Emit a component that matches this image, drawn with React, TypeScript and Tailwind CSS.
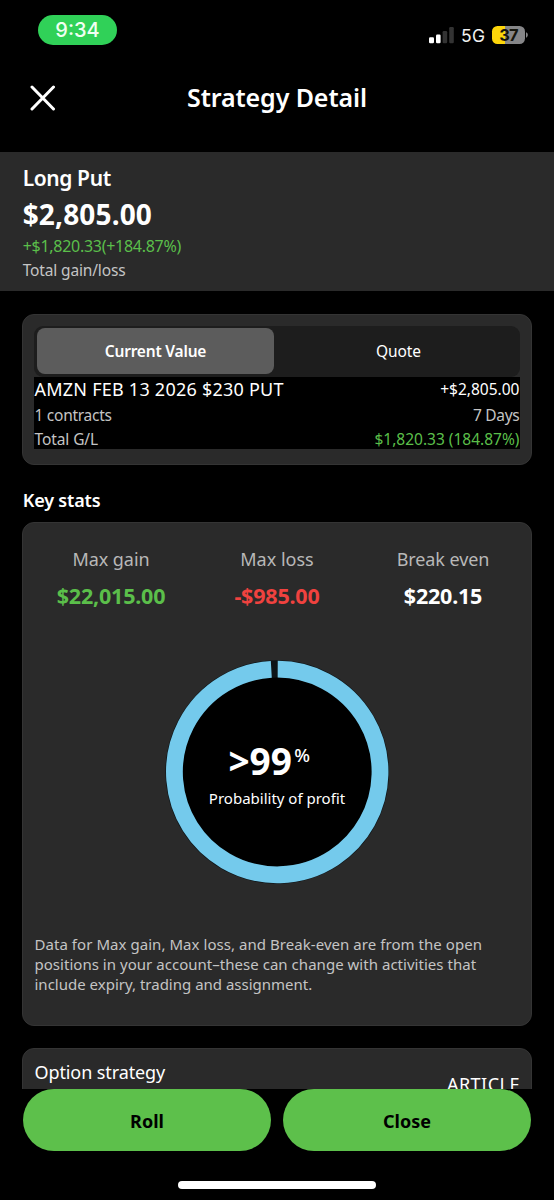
const stats = [
  { label: "Max gain", value: "$22,015.00", color: "text-[#5bbf4a]", labelTrack: "tracking-[-0.05px]" },
  { label: "Max loss", value: "-$985.00", color: "text-[#f0423f]", labelTrack: "tracking-normal" },
  { label: "Break even", value: "$220.15", color: "text-white", labelTrack: "tracking-[-0.1px]" },
];

function StatusBar() {
  return (
    <div className="flex h-[60px] shrink-0 items-start justify-between pl-[38px] pr-[26px] pt-[15px] font-['Inter',sans-serif]">
      <div className="flex h-[30px] w-[79px] items-center justify-center rounded-full bg-[#30d158] pt-px text-[20px] font-medium leading-[29px] text-[#f0fff2]">
        9:34
      </div>
      <div className="mt-[11px] flex h-[18px] items-center">
        <svg width="25" height="18" viewBox="0 0 25 18">
          <rect x="0" y="11.3" width="5" height="6" rx="1.2" fill="#fff" />
          <rect x="7" y="8.5" width="4.6" height="8.8" rx="1.2" fill="#fff" />
          <rect x="13.6" y="5" width="4.6" height="12.3" rx="1.2" fill="#333" />
          <rect x="20.2" y="1" width="4.6" height="16.3" rx="1.2" fill="#333" />
        </svg>
        <span className="ml-[7px] mt-[2px] w-[31px] text-[17.5px] leading-[18px] tracking-[0.3px] text-[#f2f2f2]">5G</span>
        <div className="flex h-[18px] w-[33px] items-center justify-center rounded-[5.5px] bg-[linear-gradient(90deg,#fdd60a_12.5px,#868688_12.5px)] text-[16.5px] font-bold leading-[18px] tracking-[-0.8px] text-[#15150c]">
          37
        </div>
        <svg className="ml-px" width="2" height="6" viewBox="0 0 2 6">
          <path d="M0 0.3C2.4 1.2 2.4 4.8 0 5.7Z" fill="#868688" />
        </svg>
      </div>
    </div>
  );
}

function ProbabilityChart() {
  return (
    <div className="mx-auto grid h-[224px] w-[224px]">
      <svg className="col-start-1 row-start-1" width="224" height="224" viewBox="0 0 224 224">
        <circle cx="112.2" cy="112" r="111.8" fill="#0b1418" />
        <circle cx="112.2" cy="112" r="94.5" fill="#000" />
        <path d="M112.7 9.2A102.8 102.8 0 1 1 106.3 9.37" fill="none" stroke="#74caec" strokeWidth="16.8" />
      </svg>
      <div className="col-start-1 row-start-1 pt-[80px] text-white">
        <div className="flex items-start pl-[63.5px]">
          <span className="text-[37px] font-bold leading-[42px] tracking-[-0.1px]">&gt;99</span>
          <span className="ml-[2.5px] text-[18.5px] font-medium leading-[29px]">%</span>
        </div>
        <p className="mt-[6px] text-center text-[15px] leading-[21px]">Probability of profit</p>
      </div>
    </div>
  );
}

export default function App() {
  return (
    <div className="flex h-[1200px] w-[554px] flex-col overflow-hidden bg-black font-['Noto_Sans',sans-serif] text-white">
      <StatusBar />
      <header className="grid h-[92px] shrink-0 grid-cols-[60px_1fr_60px] items-start">
        <button className="ml-[30px] mt-[25px] w-[26px]" aria-label="Close">
          <svg width="26" height="26" viewBox="0 0 26 26" fill="none" stroke="#fff" strokeWidth="3" strokeLinecap="round">
            <path d="M2 2L23.5 24M23.5 2L2 24" />
          </svg>
        </button>
        <h1 className="mt-[21px] text-center text-[25px] font-semibold leading-[33px] tracking-[-0.1px]">Strategy Detail</h1>
      </header>

      <section className="h-[139px] shrink-0 bg-[#2a2a2a] pl-[22.7px] pt-[13px]">
        <h2 className="text-[21px] font-semibold leading-[26px] tracking-[-0.4px]">Long Put</h2>
        <p className="mt-[6px] text-[28px] font-bold leading-[34px] tracking-[0.15px]">$2,805.00</p>
        <p className="mt-[4px] text-[16px] leading-[22px] tracking-[-0.28px] text-[#5bbf4a]">+$1,820.33(+184.87%)</p>
        <p className="mt-[3px] text-[15.5px] leading-[20px] tracking-[-0.15px] text-[#c4c4c4]">Total gain/loss</p>
      </section>

      <main className="h-[798px] shrink-0 overflow-hidden px-[22px] pt-[23px]">
        <section className="h-[151px] rounded-[12px] border border-[#343434] bg-[#2a2a2a] p-[11px]">
          <div className="grid h-[51px] grid-cols-[237px_1fr] rounded-[9px] bg-[#1d1d1d] pb-[3px] pl-[3px] pt-[2px]">
            <button className="rounded-[8px] bg-[#5c5c5c] pt-px text-[15.5px] font-semibold tracking-[-0.2px]">Current Value</button>
            <button className="pl-[3px] pt-px text-[15.5px] tracking-[-0.1px]">Quote</button>
          </div>
          <div className="h-[72px] bg-black pl-[0.5px] pr-[0.5px]">
            <div className="flex justify-between leading-[24px]">
              <span className="text-[18px] tracking-[0.24px]">AMZN FEB 13 2026 $230 PUT</span>
              <span className="text-[15.5px]">+$2,805.00</span>
            </div>
            <div className="mt-[2px] flex justify-between text-[15.5px] leading-[24px] tracking-[-0.27px] text-[#c4c4c4]">
              <span>1 contracts</span>
              <span>7 Days</span>
            </div>
            <div className="mt-[2px] flex justify-between text-[15.5px] leading-[20px] tracking-[-0.1px] text-[#c4c4c4]">
              <span>Total G/L</span>
              <span className="tracking-normal text-[#5bbf4a]">$1,820.33 (184.87%)</span>
            </div>
          </div>
        </section>

        <h2 className="mt-[23px] pl-[0.7px] text-[18px] font-semibold leading-[24px] tracking-[-0.17px]">Key stats</h2>

        <section className="mt-[10px] h-[504px] rounded-[12px] border border-[#343434] bg-[#2a2a2a] pt-[24px]">
          <div className="mb-[50px] grid grid-cols-3 px-[5px] text-center">
            {stats.map((s) => (
              <div key={s.label}>
                <p className={`text-[18px] leading-[24px] text-[#b8b8b8] ${s.labelTrack}`}>{s.label}</p>
                <p className={`mt-[10px] text-[21.5px] font-bold leading-[29px] tracking-[-0.2px] ${s.color}`}>{s.value}</p>
              </div>
            ))}
          </div>
          <ProbabilityChart />
          <p className="mt-[50px] pl-[11.5px] text-[15px] leading-[20px] tracking-[0.05px] text-[#c4c4c4]">
            Data for Max gain, Max loss, and Break-even are from the open
            <br />
            <span className="tracking-[0.03px]">positions in your account–these can change with activities that</span>
            <br />
            <span className="tracking-normal">include expiry, trading and assignment.</span>
          </p>
        </section>

        <section className="mt-[22px] flex h-[90px] justify-between rounded-[12px] border border-[#343434] bg-[#2a2a2a] px-[11px] pt-[11px] leading-[24px]">
          <span className="pl-[0.5px] text-[18px] tracking-[-0.1px]">Option strategy</span>
          <span className="mt-[12px] text-[18px] tracking-[0.5px]">ARTICLE</span>
        </section>
      </main>

      <footer className="flex flex-1 flex-col items-center px-[23px]">
        <div className="grid h-[62px] w-full grid-cols-2 gap-[12px] text-[18px] font-bold text-black">
          <button className="rounded-full bg-[#5dc04b] pt-[2px]">Roll</button>
          <button className="rounded-full bg-[#5dc04b] pt-[2px]">Close</button>
        </div>
        <div className="mt-[30px] h-[8px] w-[198px] rounded-full bg-white" />
      </footer>
    </div>
  );
}
